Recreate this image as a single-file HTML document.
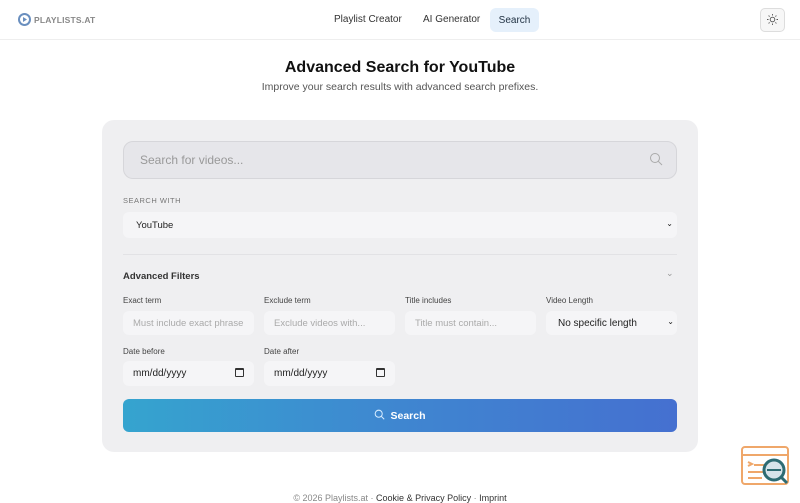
<!DOCTYPE html>
<html><head><style>
*{box-sizing:border-box;margin:0;padding:0}
body{width:800px;height:500px;overflow:hidden;background:#fff;font-family:"Liberation Sans",sans-serif;position:relative;color:#111}
.a{position:absolute}
.nav{left:0;top:0;width:800px;height:40px;border-bottom:1px solid #eee}
.card{left:102px;top:120px;width:596px;height:332px;background:#efeff1;border-radius:12px}
.lbl{font-size:8px;color:#444}
.in{height:24px;background:#f5f5f7;border-radius:6px;font-size:9.5px;color:#aaa;padding:7px 10px;width:131px}
.d{color:#222;font-size:10px;padding-top:7px}
</style></head><body>
<div class="a nav"></div>
<svg class="a" style="left:18px;top:13px" width="13" height="13" viewBox="0 0 13 13"><circle cx="6.5" cy="6.5" r="5.5" fill="none" stroke="#6a8fbf" stroke-width="2"/><path d="M5 4v5l4-2.5z" fill="#6a8fbf"/></svg>
<div class="a" style="left:34px;top:15px;font-size:8.5px;color:#888;font-weight:bold;letter-spacing:.2px">PLAYLISTS.AT</div>
<div class="a" style="left:334px;top:14px;font-size:10px;color:#333">Playlist Creator</div>
<div class="a" style="left:423px;top:14px;font-size:10px;color:#333">AI Generator</div>
<div class="a" style="left:490px;top:8px;width:49px;height:24px;background:#e5f0fb;border-radius:6px;font-size:10px;color:#234;text-align:center;padding-top:7px">Search</div>
<div class="a" style="left:760px;top:8px;width:25px;height:24px;border:1px solid #ddd;border-radius:5px;background:#f7f7f7"></div>
<svg class="a" style="left:766px;top:13px" width="13" height="13" viewBox="0 0 13 13" fill="none" stroke="#555" stroke-width=".9"><circle cx="6.5" cy="6.5" r="2.3"/><path d="M6.5 1v1.5M6.5 10.5V12M1 6.5h1.5M10.5 6.5H12M2.6 2.6l1 1M9.4 9.4l1 1M2.6 10.4l1-1M9.4 3.6l1-1"/></svg>
<div class="a" style="left:0;width:800px;top:59px;text-align:center;font-size:16px;font-weight:bold">Advanced Search for YouTube</div>
<div class="a" style="left:0;width:800px;top:81px;text-align:center;font-size:10.5px;color:#555">Improve your search results with advanced search prefixes.</div>
<div class="a card"></div>
<div class="a" style="left:123px;top:141px;width:554px;height:38px;background:#e6e6ea;border:1px solid #d6d6da;border-radius:10px;font-size:12px;color:#999;padding:11px 16px">Search for videos...</div>
<svg class="a" style="left:649px;top:152px" width="14" height="14" viewBox="0 0 14 14" fill="none" stroke="#aaa" stroke-width="1"><circle cx="6" cy="6" r="4.5"/><path d="M9.3 9.3L13 13"/></svg>
<div class="a" style="left:123px;top:196px;font-size:7.5px;color:#777;letter-spacing:.5px">SEARCH WITH</div>
<div class="a" style="left:123px;top:212px;width:554px;height:26px;background:#f5f5f7;border-radius:6px;font-size:9.5px;color:#222;padding:8px 13px">YouTube<span style="position:absolute;right:4px;top:7px;font-size:8px">&#8964;</span></div>
<div class="a" style="left:123px;top:254px;width:554px;height:1px;background:#e2e2e5"></div>
<div class="a" style="left:123px;top:271px;font-size:9.5px;font-weight:bold;color:#333">Advanced Filters</div>
<div class="a" style="left:666px;top:268px;font-size:9px;color:#999">&#8964;</div>
<div class="a lbl" style="left:123px;top:296px">Exact term</div>
<div class="a lbl" style="left:264px;top:296px">Exclude term</div>
<div class="a lbl" style="left:405px;top:296px">Title includes</div>
<div class="a lbl" style="left:546px;top:296px">Video Length</div>
<div class="a in" style="left:123px;top:311px">Must include exact phrase</div>
<div class="a in" style="left:264px;top:311px">Exclude videos with...</div>
<div class="a in" style="left:405px;top:311px">Title must contain...</div>
<div class="a in" style="left:546px;top:311px;color:#222;font-size:10px;padding-left:12px">No specific length<span style="position:absolute;right:3px;top:6px;font-size:8px">&#8964;</span></div>
<div class="a lbl" style="left:123px;top:347px">Date before</div>
<div class="a lbl" style="left:264px;top:347px">Date after</div>
<div class="a in d" style="left:123px;top:361px;height:25px">mm/dd/yyyy<span style="position:absolute;right:10px;top:7px;width:9px;height:9px;border:1.5px solid #333;border-top-width:2.5px;border-radius:1px"></span></div>
<div class="a in d" style="left:264px;top:361px;height:25px">mm/dd/yyyy<span style="position:absolute;right:10px;top:7px;width:9px;height:9px;border:1.5px solid #333;border-top-width:2.5px;border-radius:1px"></span></div>
<div class="a" style="left:123px;top:399px;width:554px;height:33px;border-radius:6px;background:linear-gradient(90deg,#35a4cf,#3f86d0 50%,#4570d0);color:#fff;font-size:10.5px;font-weight:bold;text-align:center;padding-top:10px"><svg width="11" height="11" viewBox="0 0 14 14" fill="none" stroke="#d6ecff" stroke-width="1.3" style="vertical-align:-1px;margin-right:5px"><circle cx="6" cy="6" r="4.5"/><path d="M9.3 9.3L13 13"/></svg>Search</div>
<div class="a" style="left:0;width:800px;top:493px;text-align:center;font-size:9px;color:#888">© 2026 Playlists.at · <span style="color:#333">Cookie &amp; Privacy Policy</span> · <span style="color:#333">Imprint</span></div>
<svg class="a" style="left:740px;top:445px" width="52" height="45" viewBox="0 0 52 45" fill="none"><rect x="2" y="2" width="46" height="37" rx="3" stroke="#efa76a" stroke-width="2"/><path d="M2 10h46" stroke="#efa76a" stroke-width="2"/><path d="M8 17l4 2-4 2M14 20h12M8 27h18M8 33h14" stroke="#efa76a" stroke-width="2"/><circle cx="34" cy="25" r="10" fill="#d6e3ea" stroke="#2d6b73" stroke-width="3"/><path d="M27 25h14" stroke="#2d6b73" stroke-width="2"/><path d="M41 32l6 6" stroke="#2d6b73" stroke-width="3"/></svg>
</body></html>
